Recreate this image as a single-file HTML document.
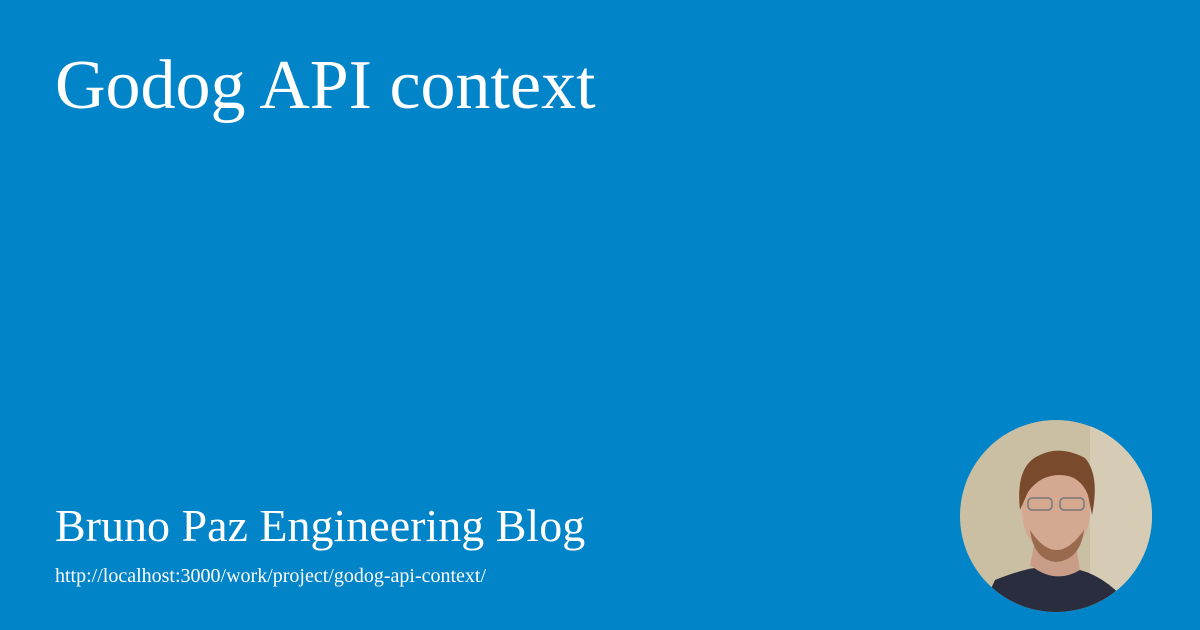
<!DOCTYPE html>
<html><head><style>
html,body{margin:0;padding:0}
body{width:1200px;height:630px;background:#0284c8;position:relative;overflow:hidden;font-family:"Liberation Serif",serif;color:#fff}
.t{position:absolute;left:55px;top:46px;font-size:70px;line-height:80px;white-space:nowrap}
.b{position:absolute;left:55px;top:500px;font-size:46px;line-height:52px;white-space:nowrap}
.u{position:absolute;left:55px;top:564px;font-size:20px;line-height:24px;white-space:nowrap}
svg{position:absolute;left:960px;top:420px}
</style></head><body>
<div class="t">Godog API context</div>
<div class="b">Bruno Paz Engineering Blog</div>
<div class="u">http://localhost:3000/work/project/godog-api-context/</div>
<svg width="192" height="192" viewBox="0 0 192 192">
<defs><clipPath id="c"><circle cx="96" cy="96" r="96"/></clipPath></defs>
<g clip-path="url(#c)">
<rect width="192" height="192" fill="#cbbfa3"/>
<rect x="130" width="62" height="192" fill="#d6ccb5"/>
<path d="M20 192 L35 160 Q60 150 75 148 L120 150 Q150 158 175 192 Z" fill="#2a2d3e"/>
<path d="M70 145 Q95 165 120 150 L115 120 L75 120 Z" fill="#c99d88"/>
<ellipse cx="96" cy="90" rx="34" ry="46" fill="#d4a891"/>
<path d="M60 90 Q55 45 80 35 Q100 25 125 38 Q140 55 132 95 L128 75 Q120 55 100 55 Q80 55 68 72 Z" fill="#7a4a2c"/>
<path d="M70 110 Q96 150 124 110 Q120 140 96 142 Q74 140 70 110 Z" fill="#9a6a4e"/>
<rect x="68" y="78" width="24" height="12" rx="4" fill="none" stroke="#777" stroke-width="1.5"/>
<rect x="100" y="78" width="24" height="12" rx="4" fill="none" stroke="#777" stroke-width="1.5"/>
</g></svg>
</body></html>
